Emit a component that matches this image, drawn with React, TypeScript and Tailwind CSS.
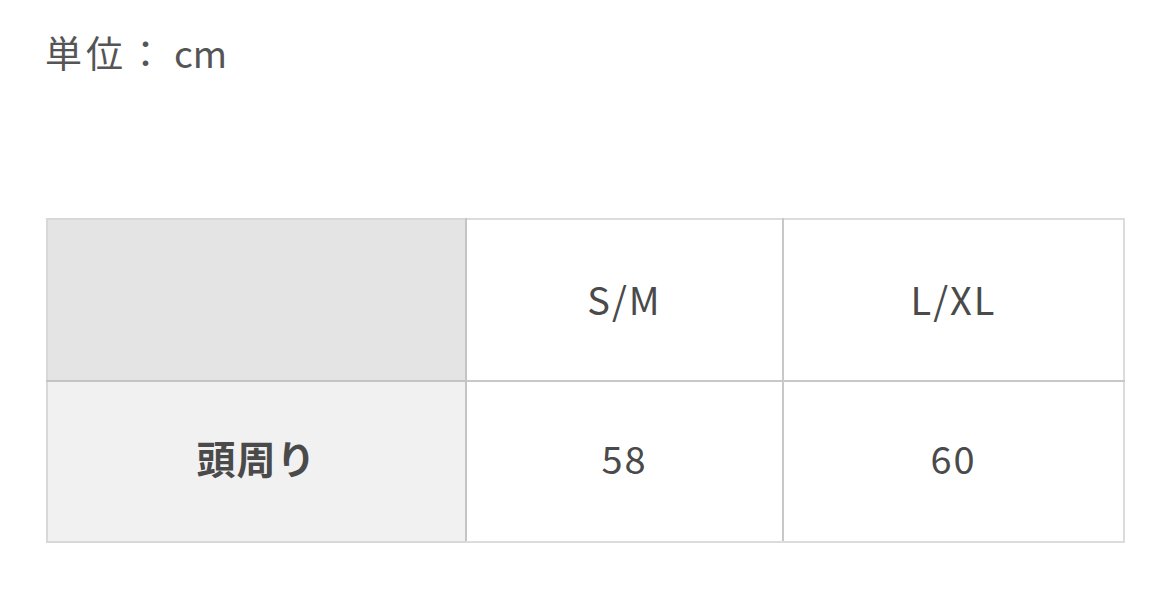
import React from 'react';

const font = { fontFamily: '"Noto Sans CJK JP", "Noto Sans", sans-serif' };

export default function App() {
  return (
    <div className="w-[1162px] h-[602px] bg-white text-[#4a4a4a]" style={font}>
      <div className="pl-[45px] pt-[25px]">
        <p className="text-[37px] leading-[54px] text-[#555]">
          <span className="tracking-[4px]">単位：</span>
          <span className="ml-[6px]">cm</span>
        </p>
      </div>
      <div className="pl-[46px] pt-[139px]">
        <table className="border-collapse">
          <tbody>
            <tr className="h-[162px]">
              <td className="w-[419px] bg-[#e4e4e4] border-2 border-[#d8d8d8] border-r-[#c4c4c4] border-b-[#c4c4c4]" />
              <td className="w-[317px] pb-[4px] text-center text-[38px] tracking-[2px] border-2 border-[#dcdcdc] border-r-[#c8c8c8] border-b-[#c8c8c8]">
                S/M
              </td>
              <td className="w-[341px] pb-[4px] text-center text-[38px] tracking-[2px] border-2 border-[#dcdcdc] border-b-[#c8c8c8]">
                L/XL
              </td>
            </tr>
            <tr className="h-[161px]">
              <td className="pb-[8px] bg-[#f1f1f1] text-center text-[39px] font-bold tracking-[1px] border-2 border-[#d8d8d8] border-r-[#c4c4c4]">
                頭周り
              </td>
              <td className="pb-[8px] text-center text-[38px] tracking-[2px] border-2 border-[#dcdcdc] border-r-[#c8c8c8]">
                58
              </td>
              <td className="pb-[8px] text-center text-[38px] tracking-[2px] border-2 border-[#dcdcdc]">
                60
              </td>
            </tr>
          </tbody>
        </table>
      </div>
    </div>
  );
}
